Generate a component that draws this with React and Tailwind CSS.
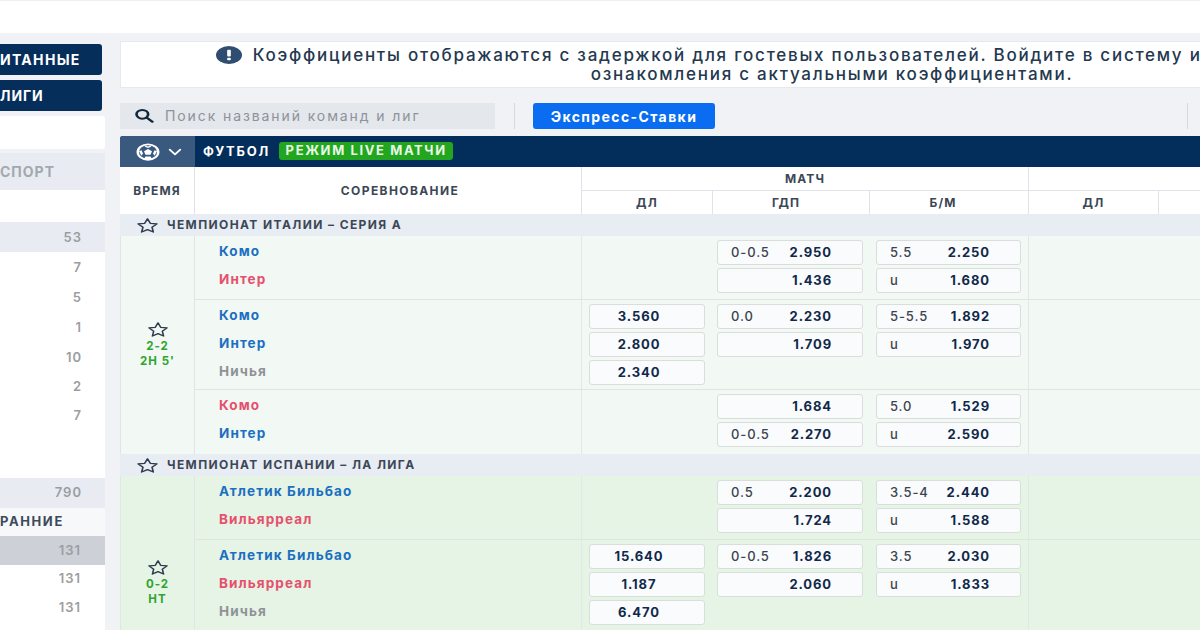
const sideRows = [
  { n: "53", cls: "h-[30px] bg-[#e8ecf2]" },
  { n: "7", cls: "h-[30px]" },
  { n: "5", cls: "h-[30px]" },
  { n: "1", cls: "h-[30px]" },
  { n: "10", cls: "h-[30px]" },
  { n: "2", cls: "h-[29px]" },
  { n: "7", cls: "h-[29px]" },
];

const leagues = [
  {
    name: "ЧЕМПИОНАТ ИТАЛИИ – СЕРИЯ А",
    bg: "bg-[#f2f8f3]",
    score: "2-2",
    time: "2H 5'",
    rows: [
      {
        teams: [["Комо", "b"], ["Интер", "r"]],
        dl: [],
        gdp: [["0-0.5", "2.950"], ["", "1.436"]],
        bm: [["5.5", "2.250"], ["u", "1.680"]],
      },
      {
        teams: [["Комо", "b"], ["Интер", "b"], ["Ничья", "g"]],
        dl: ["3.560", "2.800", "2.340"],
        gdp: [["0.0", "2.230"], ["", "1.709"]],
        bm: [["5-5.5", "1.892"], ["u", "1.970"]],
      },
      {
        teams: [["Комо", "r"], ["Интер", "b"]],
        dl: [],
        gdp: [["", "1.684"], ["0-0.5", "2.270"]],
        bm: [["5.0", "1.529"], ["u", "2.590"]],
      },
    ],
  },
  {
    name: "ЧЕМПИОНАТ ИСПАНИИ – ЛА ЛИГА",
    bg: "bg-[#e5f4e5]",
    score: "0-2",
    time: "HT",
    tail: true,
    rows: [
      {
        teams: [["Атлетик Бильбао", "b"], ["Вильярреал", "r"]],
        dl: [],
        gdp: [["0.5", "2.200"], ["", "1.724"]],
        bm: [["3.5-4", "2.440"], ["u", "1.588"]],
      },
      {
        teams: [["Атлетик Бильбао", "b"], ["Вильярреал", "r"], ["Ничья", "g"]],
        dl: ["15.640", "1.187", "6.470"],
        gdp: [["0-0.5", "1.826"], ["", "2.060"]],
        bm: [["3.5", "2.030"], ["u", "1.833"]],
      },
    ],
  },
];

const teamColor = {
  b: "text-[#1b6fc2]",
  r: "text-[#e5506e]",
  g: "text-[#8f9296]",
};

function StarIcon({ className }) {
  return (
    <svg viewBox="0 0 24 24" preserveAspectRatio="none" className={className} fill="none" stroke="#2d3b4c" strokeWidth="1.7" strokeLinejoin="round">
      <path d="M12 2.5l2.9 6.4 7 .8-5.2 4.7 1.4 6.9-6.1-3.5-6.1 3.5 1.4-6.9L2.100 9.700l7-.8z" />
    </svg>
  );
}

function Ball() {
  return (
    <svg viewBox="0 0 24 24" preserveAspectRatio="none" className="h-[18px] w-[24px] shrink-0">
      <circle cx="12" cy="12" r="10.300" fill="none" stroke="#fff" strokeWidth="2.400" />
      <path d="M12 8l4 3-1.500 4.500h-5L8 11z" fill="#fff" />
      <path d="M8.500 3l3.500 1.500L15.500 3l-.5 2-3 1.500L9 5zM3 11l2.500-1.500L7 14l-1.500 3zM21 11l-2.500-1.500L17 14l1.500 3zM8 21l1.500-3h5l1.500 3-4 1z" fill="#fff" />
    </svg>
  );
}

function Chevron() {
  return (
    <svg viewBox="0 0 16 10" preserveAspectRatio="none" className="h-[8px] w-[14px] shrink-0" fill="none" stroke="#fff" strokeWidth="2.200" strokeLinecap="round" strokeLinejoin="round">
      <path d="M2 2l6 6 6-6" />
    </svg>
  );
}

function SearchIcon() {
  return (
    <svg viewBox="0 0 24 24" preserveAspectRatio="none" className="h-[15px] w-[20px] shrink-0" fill="none" stroke="#12263c" strokeWidth="3.200">
      <circle cx="10" cy="10" r="7" />
      <path d="M15.500 15.500L22 22" strokeLinecap="round" />
    </svg>
  );
}

function Odd({ label, value, widthCls }) {
  return (
    <div className={`flex h-[25px] items-center justify-between rounded-[3px] border border-[#d9dedb] bg-[#fafbfc] pl-[13px] pr-[30px] ${widthCls}`}>
      <span className="font-medium text-[#3a4450]">{label}</span>
      <span className="font-bold text-[#10294a]">{value}</span>
    </div>
  );
}

function MatchRow({ row, last }) {
  const tall = row.teams.length === 3;
  return (
    <div className={`flex ${tall ? "h-[90px]" : "h-[64px]"} ${last ? "" : "border-b border-[#dfe6e2]"}`}>
      <div className="flex w-[386px] shrink-0 flex-col gap-[8px] pl-[24px] pt-[5px]">
        {row.teams.map(([name, c], i) => (
          <div key={i} className={`flex h-[20px] items-center text-[13.500px] font-bold tracking-[1.100px] ${teamColor[c]}`}>
            {name}
          </div>
        ))}
      </div>
      <div className="flex w-[447px] shrink-0 border-l border-[#e2e8e4] pt-[4px] text-[13px] tracking-[0.9px]">
        <div className="flex w-[130px] shrink-0 flex-col gap-[3px] pl-[7px]">
          {row.dl.map((v) => (
            <div key={v} className="flex h-[25px] w-[116px] items-center justify-center rounded-[3px] border border-[#d9dedb] bg-[#fafbfc] pr-[16px] font-bold text-[#10294a]">
              {v}
            </div>
          ))}
        </div>
        <div className="flex w-[159px] shrink-0 flex-col gap-[3px] pl-[5px]">
          {row.gdp.map(([l, v], i) => (
            <Odd key={i} label={l} value={v} widthCls="w-[146px]" />
          ))}
        </div>
        <div className="flex w-[157px] shrink-0 flex-col gap-[3px] pl-[5px]">
          {row.bm.map(([l, v], i) => (
            <Odd key={i} label={l} value={v} widthCls="w-[145px]" />
          ))}
        </div>
      </div>
      <div className="flex-1 border-l border-[#e2e8e4]" />
    </div>
  );
}

export default function App() {
  return (
    <div className="flex h-[630px] w-[1200px] flex-col overflow-hidden bg-[#f0f2f6] font-['Inter','Liberation_Sans',sans-serif]">
      <div className="h-[33px] shrink-0 border-t border-[#f0f0f0] bg-white" />

      <div className="flex min-h-0 flex-1">
        {/* Sidebar */}
        <aside className="flex w-[105px] shrink-0 flex-col pt-[11px]">
          <div className="flex h-[31px] w-[102px] items-center rounded-r-[3px] bg-[#052e5b] text-[14px] font-bold tracking-[1.300px] text-white">
            ИТАННЫЕ
          </div>
          <div className="mt-[5px] flex h-[31px] w-[102px] items-center rounded-r-[3px] bg-[#052e5b] text-[14px] font-bold tracking-[0.9px] text-white">
            ЛИГИ
          </div>
          <div className="mt-[5px] h-[33px] rounded-r-[3px] bg-white" />
          <div className="mt-[4px] flex h-[37px] items-center bg-[#e8ecf2] text-[14px] font-bold tracking-[1px] text-[#a3a8ae]">
            СПОРТ
          </div>
          <div className="flex-1 bg-white">
            <div className="h-[32px]" />
            {sideRows.map((r, i) => (
              <div key={i} className={`flex items-center justify-end pr-[23px] pt-[1px] text-[13px] font-semibold tracking-[1px] text-[#9a9ea3] ${r.cls}`}>
                {r.n}
              </div>
            ))}
            <div className="h-[48px]" />
            <div className="flex h-[30px] items-center justify-end bg-[#e8ecf2] pr-[23px] text-[13px] font-semibold tracking-[1px] text-[#9a9ea3]">
              790
            </div>
            <div className="flex h-[28px] items-center bg-[#f7f8fa] text-[13px] font-bold tracking-[1.600px] text-[#3d4a5a]">
              РАННИЕ
            </div>
            {["bg-[#cdd0d6]", "", ""].map((c, i) => (
              <div key={i} className={`flex h-[28.500px] items-center justify-end pr-[24px] text-[13px] font-semibold tracking-[1px] text-[#9a9ea3] ${c}`}>
                131
              </div>
            ))}
          </div>
        </aside>

        {/* Main */}
        <main className="ml-[15px] flex w-[1080px] shrink-0 flex-col overflow-hidden pt-[8px]">
          <div className="flex h-[47px] w-[1424px] shrink-0 items-center justify-center border border-[#e6e9ee] bg-white text-center text-[17px] font-medium leading-[19px] tracking-[1.750px] text-[#24384f]">
            <div className="whitespace-nowrap">
              <svg viewBox="0 0 24 24" preserveAspectRatio="none" className="mr-[11px] inline-block h-[18px] w-[26px] align-[-3px]">
                <circle cx="12" cy="12" r="12" fill="#2f4d70" />
                <rect x="10.300" y="5" width="3.400" height="9" rx="1" fill="#fff" />
                <rect x="10.300" y="15.500" width="3.400" height="3.500" rx="1" fill="#fff" />
              </svg>
              Коэффициенты отображаются с задержкой для гостевых пользователей. Войдите в систему или зарегистрируйтесь <span className="-mr-[18px]">для</span>
              <br />
              ознакомления с актуальными коэффициентами.
            </div>
          </div>

          <div className="mt-[15px] flex h-[26px] shrink-0 items-center">
            <div className="flex h-full w-[375px] items-center gap-[11px] bg-[#e4e7ec] pb-[1px] pl-[14px] text-[14px] tracking-[1.900px] text-[#8d929a]">
              <SearchIcon />
              Поиск названий команд и лиг
            </div>
            <div className="ml-[19px] h-[26px] w-px bg-[#d5d9df]" />
            <button className="ml-[18px] h-[26px] w-[182px] rounded-[3px] bg-[#0a6cf0] text-[14px] font-bold tracking-[1.400px] text-white">
              Экспресс-Ставки
            </button>
            <div className="ml-[472px] h-[26px] w-px bg-[#d5d9df]" />
          </div>

          <div className="mt-[7px] flex h-[31px] shrink-0 items-center rounded-tl-[3px] bg-[#032d5a]">
            <div className="flex h-full w-[75px] items-center justify-center gap-[8px] rounded-tl-[3px] bg-[#39597f] pl-[2px]">
              <Ball />
              <Chevron />
            </div>
            <span className="ml-[8px] text-[13px] font-bold tracking-[1.800px] text-white">ФУТБОЛ</span>
            <span className="mb-[2px] ml-[9px] flex h-[18px] w-[174px] items-center justify-center rounded-[3px] bg-[#22a51f] text-[13px] font-bold tracking-[1.600px] text-[#e9f8e6]">
              РЕЖИМ LIVE МАТЧИ
            </span>
          </div>

          {/* Column headers */}
          <div className="flex h-[47px] shrink-0 bg-white text-[12px] font-bold tracking-[1.100px] text-[#3b4756]">
            <div className="flex w-[75px] shrink-0 items-center justify-center border-r border-[#e0e4ea]">ВРЕМЯ</div>
            <div className="flex w-[386px] shrink-0 items-center justify-center pl-[24px] pt-[1px] tracking-[1.400px]">СОРЕВНОВАНИЕ</div>
            <div className="flex w-[447px] shrink-0 flex-col border-l border-[#e0e4ea]">
              <div className="flex h-[24px] items-center justify-center border-b border-[#e0e4ea]">МАТЧ</div>
              <div className="flex flex-1">
                <div className="flex w-[130px] items-center justify-center">ДЛ</div>
                <div className="flex w-[157px] items-center justify-center border-l border-[#e0e4ea] pr-[10px]">ГДП</div>
                <div className="flex w-[159px] items-center justify-center border-l border-[#e0e4ea] pr-[12px]">Б/М</div>
              </div>
            </div>
            <div className="flex flex-1 flex-col border-l border-[#e0e4ea]">
              <div className="h-[24px] border-b border-[#e0e4ea]" />
              <div className="flex flex-1">
                <div className="flex w-[129px] items-center justify-center">ДЛ</div>
                <div className="flex-1 border-l border-[#e0e4ea]" />
              </div>
            </div>
          </div>

          {/* Leagues */}
          {leagues.map((lg) => (
            <div key={lg.name} className="shrink-0">
              <div className="flex h-[22px] items-center bg-[#e8ecf3] pl-[16px] text-[12px] font-bold tracking-[1.400px] text-[#3b4756]">
                <StarIcon className="mr-[8px] h-[17px] w-[23px]" />
                {lg.name}
              </div>
              <div className={`flex ${lg.bg}`}>
                <div className="flex w-[75px] shrink-0 flex-col items-center justify-center border-x border-[#e0e6e3] text-[11.500px] font-bold leading-[15px] tracking-[1px] text-[#2ea52f]">
                  <StarIcon className="mb-[1px] h-[17px] w-[22px]" />
                  <span>{lg.score}</span>
                  <span>{lg.time}</span>
                </div>
                <div className="min-w-0 flex-1">
                  {lg.rows.map((row, i) => (
                    <MatchRow key={i} row={row} last={i === lg.rows.length - 1} />
                  ))}
                  {lg.tail && <div className="h-[60px]" />}
                </div>
              </div>
            </div>
          ))}
        </main>
      </div>
    </div>
  );
}
